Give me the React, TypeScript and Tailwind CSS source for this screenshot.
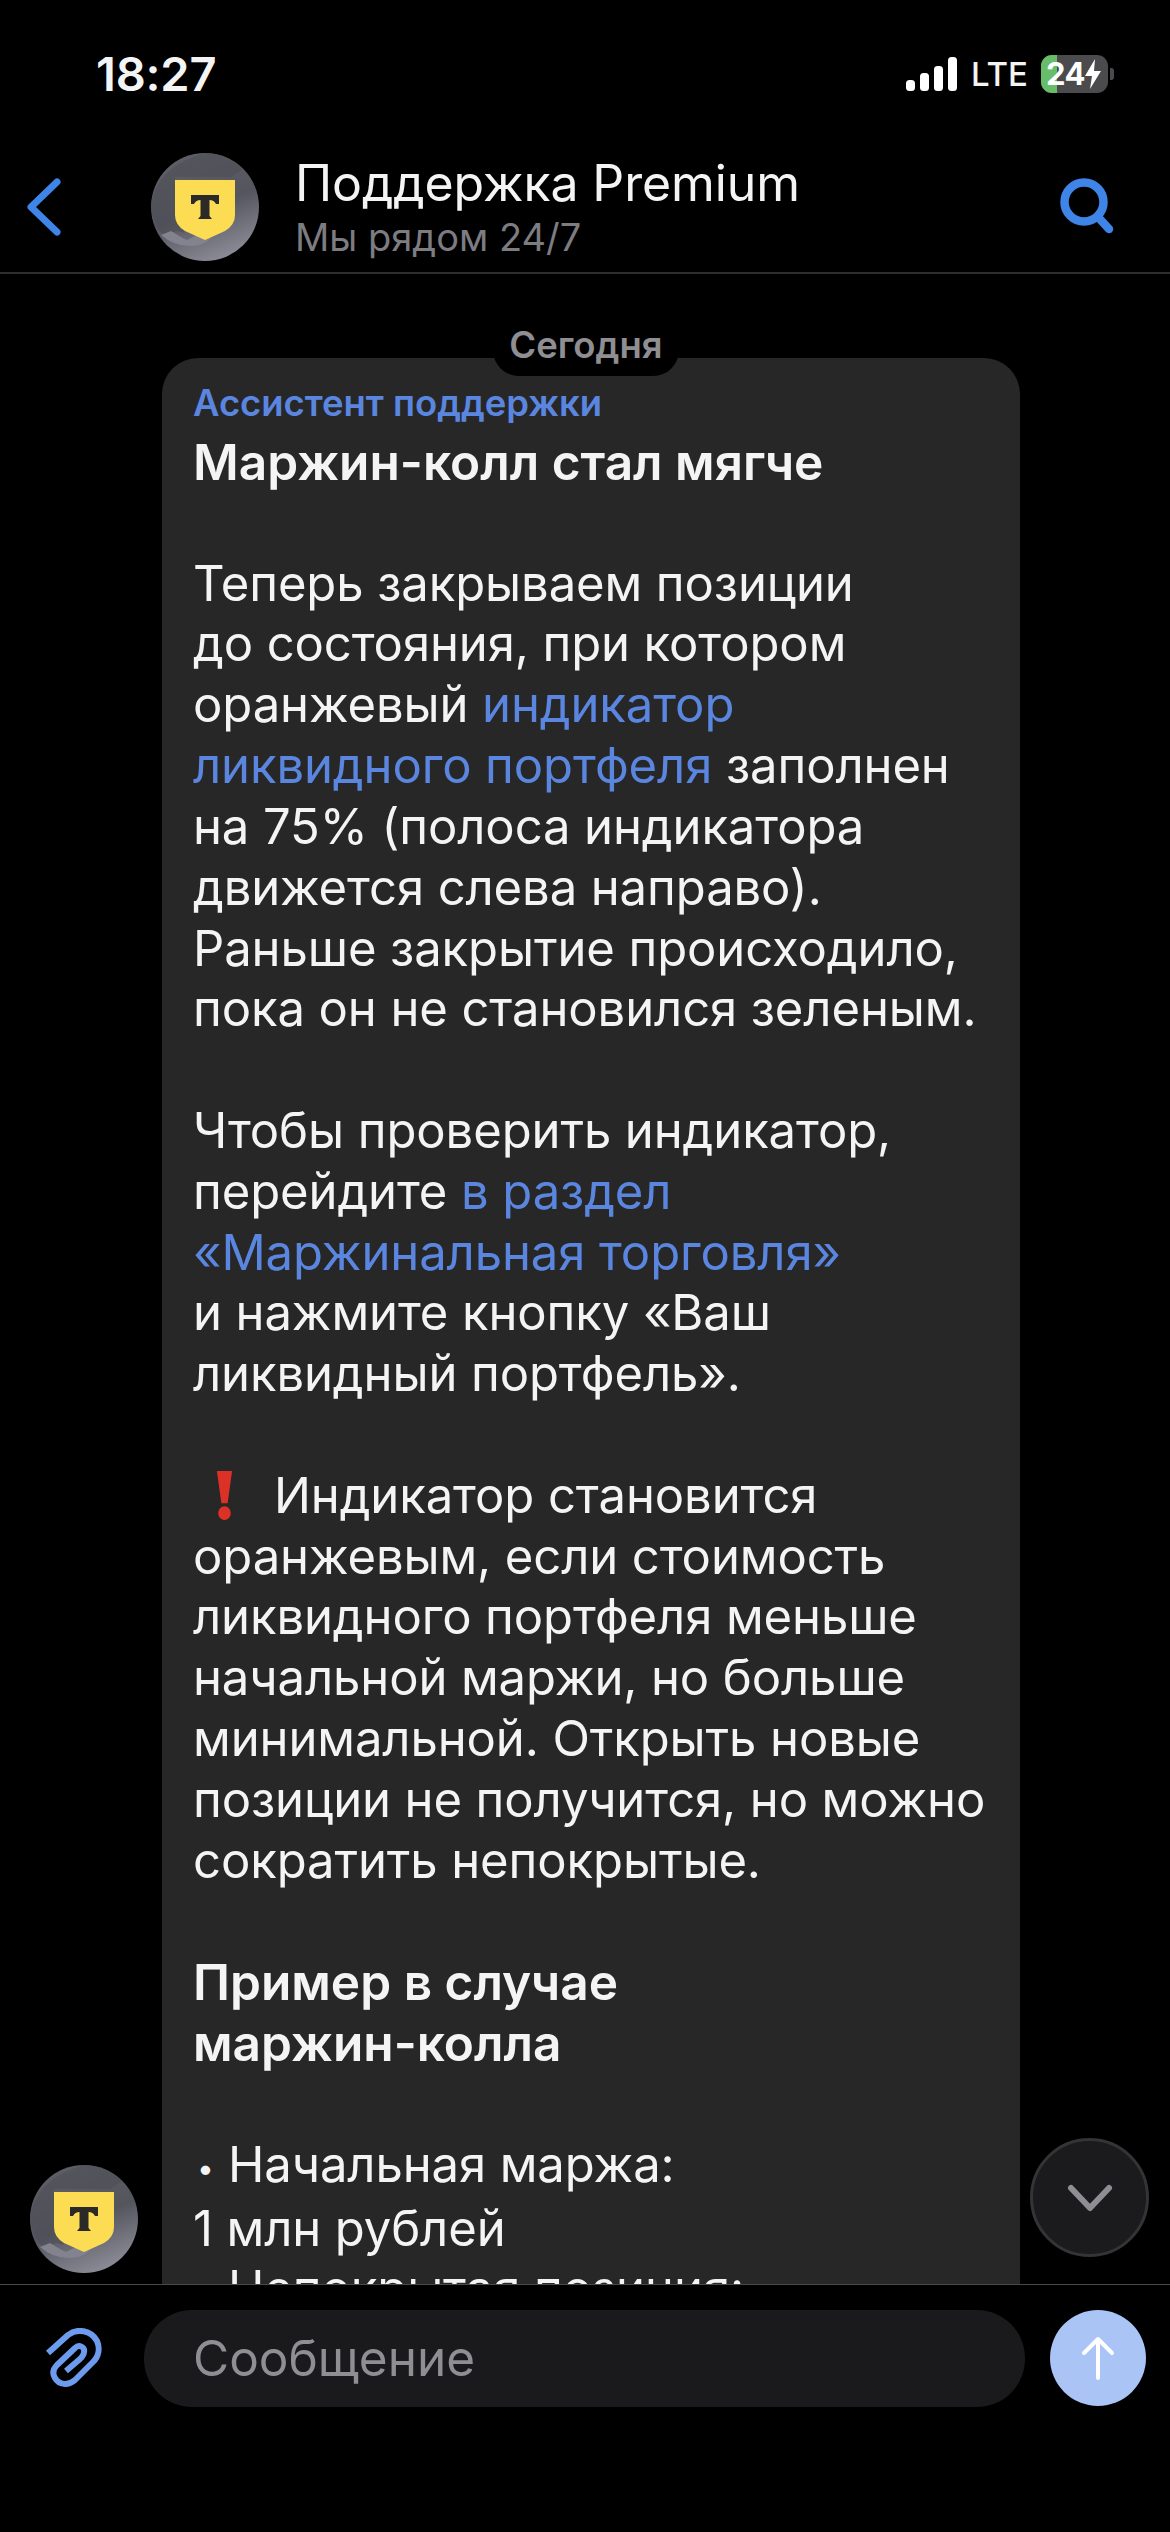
import React from "react";

function Logo({ size, id }: { size: number; id: string }) {
  return (
    <svg width={size} height={size} viewBox="0 0 108 108" className="block shrink-0">
      <defs>
        <linearGradient id={id} x1="0.2" y1="0" x2="0.6" y2="1">
          <stop offset="0" stopColor="#5f5f68" />
          <stop offset="0.55" stopColor="#55555e" />
          <stop offset="1" stopColor="#8b8b97" />
        </linearGradient>
      </defs>
      <circle cx="54" cy="54" r="54" fill={`url(#${id})`} />
      <path d="M0 54 Q4 14 54 0 Q74 0 92 16 L80 24 H24 V60 L34 80 L26 78 L12 82 Q2 70 0 54Z" fill="#4d4d55" opacity="0.55" />
      <path d="M10 82 L20 78 L30 84 L36 87 L46 82 L70 70 Q62 88 48 92 Q26 96 10 82Z" fill="#83838f" />
      <path d="M24 27 H84 V62 Q84 72 74 78 L54 87 L34 78 Q24 72 24 62Z" fill="#fbdc52" />
      <path d="M40 42 H68 V51 H65 Q63 47 58.500 47 V63 L61 66 H47 L49.500 63 V47 Q45 47 43 51 H40Z" fill="#2c2a26" />
    </svg>
  );
}

function Link({ children }: { children: React.ReactNode }) {
  return <span className="text-[#5a86e0]">{children}</span>;
}

function Bullet() {
  return <span className="inline-block w-[35px] text-[30px] pl-[4px] align-[3px]">•</span>;
}

export default function App() {
  return (
    <div className="w-[1170px] h-[2532px] bg-black flex flex-col overflow-hidden text-[#f4f4f5] font-['Inter','Noto_Sans',sans-serif]">
      {/* status bar */}
      <div className="h-[130px] shrink-0 flex items-start justify-between pt-[50px] pl-[96px] pr-[56px]">
        <span className="text-[47px] leading-[48px] font-semibold tracking-[-0.2px]">18:27</span>
        <div className="flex items-start gap-[13px] pt-[6px]">
          <svg width="52" height="34" viewBox="0 0 52 34" className="mt-[1px]" fill="#fff">
            <rect x="0" y="23" width="9" height="11" rx="3.500" />
            <rect x="14" y="16" width="9" height="18" rx="3.500" />
            <rect x="28" y="9" width="9" height="25" rx="3.500" />
            <rect x="42" y="0" width="9" height="34" rx="3.500" />
          </svg>
          <span className="text-[33px] leading-[40px] font-medium -mt-[2px]">LTE</span>
          <div className="flex items-center -mt-[1px]">
            <div className="relative w-[67px] h-[38px] rounded-[11px] bg-[#4b4b4d] overflow-hidden flex items-center justify-center">
              <div className="absolute left-0 top-0 bottom-0 w-[16px] bg-[#67bd6a]" />
              <span className="relative text-[31px] leading-[38px] font-bold text-white tracking-[-0.5px] pr-[18px]">24</span>
              <svg width="18" height="32" viewBox="0 0 18 32" className="absolute right-[6px] top-[3px]" fill="#fff">
                <path d="M11 1 L1 18 H8 L6 31 L17 13 H10Z" />
              </svg>
            </div>
            <div className="w-[4px] h-[12px] rounded-r-[3px] bg-[#4b4b4d] ml-[2px]" />
          </div>
        </div>
      </div>

      {/* header */}
      <div className="h-[144px] shrink-0 flex items-start border-b-[2px] border-[#2e2e30] relative">
        <svg width="36" height="58" viewBox="0 0 36 58" className="mt-[48px] ml-[26px]" fill="none" stroke="#3f85e8" strokeWidth="7" strokeLinecap="round" strokeLinejoin="round">
          <path d="M31 4 L5 29 L31 54" />
        </svg>
        <div className="mt-[23px] ml-[89px]">
          <Logo size={108} id="avatarTop" />
        </div>
        <div className="ml-[36px] flex flex-col mt-[23px]">
          <span className="text-[50px] leading-[60px] tracking-[-0.1px]">Поддержка Premium</span>
          <span className="text-[38px] leading-[44px] mt-[2px] text-[#7c7c81]">Мы рядом 24/7</span>
        </div>
        <svg width="54" height="56" viewBox="0 0 54 56" className="absolute left-[1060px] top-[48px]" fill="none" stroke="#3f85e8" strokeLinecap="round">
          <circle cx="24" cy="24" r="19.500" strokeWidth="8.500" />
          <path d="M38 39 L49 51" strokeWidth="8.500" />
        </svg>
      </div>

      {/* chat */}
      <div className="relative flex-1 min-h-0 overflow-hidden pl-[162px] pt-[84px] border-b border-[#4a4a4c]">
        <div className="w-[858px] h-[2000px] bg-[#272727] rounded-t-[36px] pl-[31px] pt-[22px]">
          <div className="text-[36.400px] leading-[46px] font-semibold text-[#5a86e0]">Ассистент поддержки</div>
          <div className="text-[49px] leading-[60.820px] tracking-[-0.1px] mt-[6px] whitespace-nowrap">
            <div className="font-semibold text-[49.600px] tracking-[0px]">Маржин-колл стал мягче</div>
            <br />
            Теперь закрываем позиции
            <br />
            до состояния, при котором
            <br />
            оранжевый <Link>индикатор</Link>
            <br />
            <Link>ликвидного портфеля</Link> заполнен
            <br />
            на 75% (полоса индикатора
            <br />
            движется слева направо).
            <br />
            Раньше закрытие происходило,
            <br />
            пока он не становился зеленым.
            <br />
            <br />
            Чтобы проверить индикатор,
            <br />
            перейдите <Link>в раздел</Link>
            <br />
            <Link>«Маржинальная торговля»</Link>
            <br />
            и нажмите кнопку «Ваш
            <br />
            ликвидный портфель».
            <br />
            <br />
            <svg width="17" height="49" viewBox="0 0 19 50" preserveAspectRatio="none" className="inline-block align-[-7px] ml-[23px] mr-[41px]">
              <path d="M1 0 H18 L13 33 H6Z M9.500 36 a7 7 0 1 1 -0.010 0Z" fill="#dc3126" />
            </svg>
            Индикатор становится
            <br />
            оранжевым, если стоимость
            <br />
            ликвидного портфеля меньше
            <br />
            начальной маржи, но больше
            <br />
            минимальной. Открыть новые
            <br />
            позиции не получится, но можно
            <br />
            сократить непокрытые.
            <br />
            <br />
            <div className="font-semibold text-[49.600px] tracking-[0px]">Пример в случае</div>
            <div className="font-semibold text-[49.600px] tracking-[0px]">маржин-колла</div>
            <br />
            <Bullet />Начальная маржа:
            <br />
            1 млн рублей
            <br />
            <Bullet />Непокрытая позиция:
          </div>
        </div>

        {/* date pill */}
        <div className="absolute left-[493px] top-[41px] w-[186px] h-[61px] bg-black rounded-b-[26px] rounded-t-[20px] flex items-center justify-center text-[36.500px] font-semibold text-[#8e8e93]">
          Сегодня
        </div>

        {/* sender avatar */}
        <div className="absolute left-[30px] top-[1891px]">
          <Logo size={108} id="avatarBottom" />
        </div>

        {/* scroll down */}
        <div className="absolute left-[1030px] top-[1864px] w-[119px] h-[119px] rounded-full bg-[#1b1b1d] border-[3px] border-[#343436] flex items-center justify-center">
          <svg width="46" height="28" viewBox="0 0 46 28" fill="none" stroke="#8e8e93" strokeWidth="6" strokeLinecap="round" strokeLinejoin="round">
            <path d="M4 4 L23 24 L42 4" />
          </svg>
        </div>
      </div>

      {/* composer */}
      <div className="h-[247px] shrink-0 flex items-start pt-[25px] relative">
        <svg width="58" height="62" viewBox="0 0 58 62" className="mt-[18px] ml-[45px]" fill="none" stroke="#6d9cee" strokeWidth="6" strokeLinecap="butt" strokeLinejoin="round">
          <path d="M3 25 L23 7 C32 0 46 2 52 13 C55 20 54 28 48 34 L30 52 C23 58 14 57 10 50 C7 45 8 41 12 37 L30 20 C34 16 40 19 39 24 C39 27 37 29 35 31 L21 43" />
        </svg>
        <div className="w-[881px] h-[97px] ml-[41px] rounded-[48px] bg-[#1a1a1c] flex items-center pl-[49px] text-[49.500px] text-[#8e8e93]">
          Сообщение
        </div>
        <div className="w-[96px] h-[96px] ml-[25px] rounded-full bg-[#a9c4f5] flex items-center justify-center">
          <svg width="36" height="44" viewBox="0 0 36 44" fill="none" stroke="#fff" strokeWidth="4" strokeLinecap="round" strokeLinejoin="round">
            <path d="M18 42 V3 M4 17 L18 3 L32 17" />
          </svg>
        </div>
      </div>
    </div>
  );
}
